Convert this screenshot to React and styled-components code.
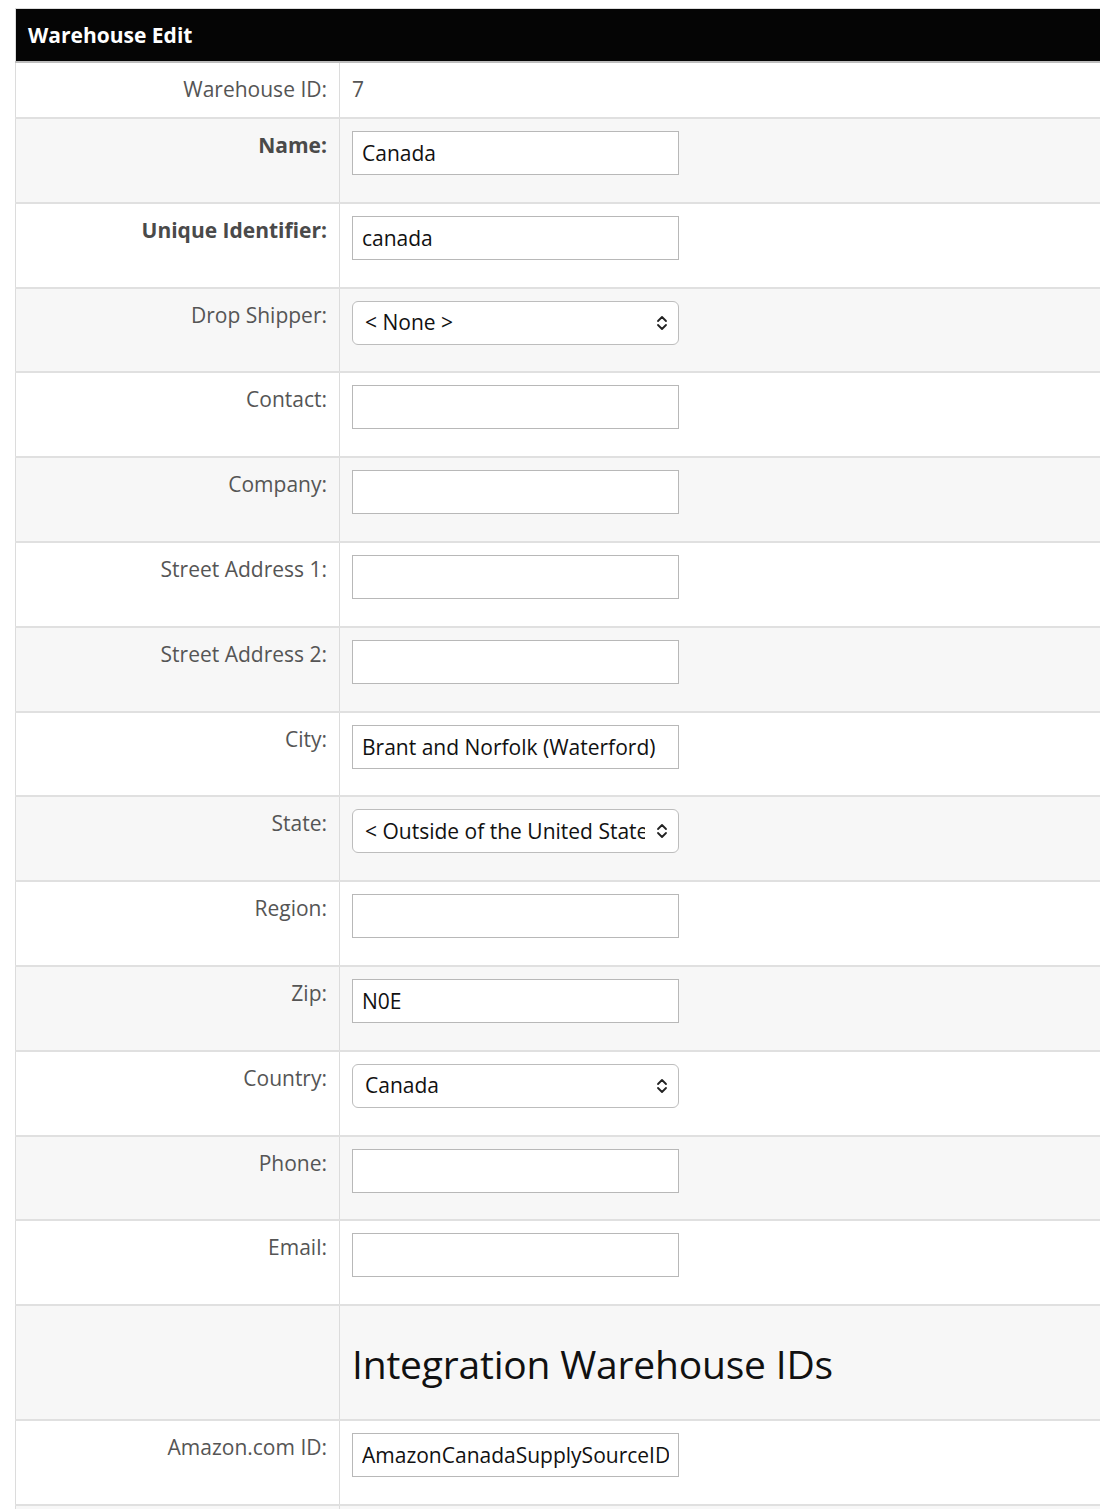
import React from "react";
import styled, { createGlobalStyle } from "styled-components";

const Global = createGlobalStyle`
  html, body { margin: 0; padding: 0; background: #fff; overflow-x: hidden; }
  body { font-family: "Open Sans", "Noto Sans", Arial, sans-serif; }
`;

const Page = styled.div`
  padding: 8px 0 0 15px;
  width: 1200px;
`;

const Table = styled.table`
  width: 1200px;
  border-collapse: collapse;
  border-left: 1px solid #dcdcdc;
  border-top: 1px solid #dcdcdc;
`;

const HeadCell = styled.th`
  background: #050505;
  color: #fff;
  text-align: left;
  font-weight: 700;
  font-size: 21px;
  height: 52px;
  padding: 0 12px;
  border-bottom: 2px solid #bdbdbd;
  line-height: 1;
`;

const Row = styled.tr`
  background: ${(p) => (p.$alt ? "#f7f7f7" : "#fff")};
  border-bottom: 2px solid #e0e0e0;
  height: ${(p) => p.$h || 84.8}px;
`;

const Label = styled.td`
  width: 311px;
  padding: ${(p) => (p.$compact ? "14px" : "14px")} 12px 0 0;
  vertical-align: top;
  text-align: right;
  color: ${(p) => (p.$strong ? "#4a4a4a" : "#555")};
  font-weight: ${(p) => (p.$strong ? 700 : 400)};
  font-size: 21px;
  line-height: 24px;
  border-right: 1px solid #dcdcdc;
  box-sizing: content-box;
`;

const Value = styled.td`
  padding: ${(p) => (p.$compact ? "14px" : "12px")} 12px 0 12px;
  vertical-align: ${(p) => (p.$middle ? "middle" : "top")};
  color: #555;
  font-size: 21px;
  line-height: 24px;
`;

const Input = styled.input`
  box-sizing: border-box;
  width: 327px;
  height: 44px;
  border: 1px solid #b8b8b8;
  border-radius: 0;
  padding: 0 9px;
  font-family: "Open Sans", "Noto Sans", Arial, sans-serif;
  font-size: 21px;
  color: #111;
  background: #fff;
  outline: none;
  display: block;
`;

const SelectBox = styled.div`
  box-sizing: border-box;
  width: 327px;
  height: 44px;
  border: 1px solid #bdbdbd;
  border-radius: 6px;
  padding: 0 10px 0 12px;
  font-size: 21px;
  line-height: 1.4;
  color: #111;
  background: #fff;
  display: flex;
  align-items: center;
  gap: 11px;
`;

const SelectText = styled.span`
  flex: 1;
  white-space: nowrap;
  overflow: hidden;
`;

const Heading = styled.h2`
  margin: 0 0 9px;
  font-weight: 400;
  font-size: 39px;
  color: #111;
  line-height: 1.2;
  letter-spacing: -0.2px;
`;

const Chevrons = () => (
  <svg width="12" height="16" viewBox="0 0 12 16" fill="none" stroke="#222" strokeWidth="1.8" strokeLinecap="round" strokeLinejoin="round">
    <path d="M2 6 L6 2 L10 6" />
    <path d="M2 10 L6 14 L10 10" />
  </svg>
);

const Select = ({ value }) => (
  <SelectBox>
    <SelectText>{value}</SelectText>
    <Chevrons />
  </SelectBox>
);

const fields = [
  { label: "Name:", strong: true, input: "Canada" },
  { label: "Unique Identifier:", strong: true, input: "canada" },
  { label: "Drop Shipper:", select: "< None >" },
  { label: "Contact:", input: "" },
  { label: "Company:", input: "" },
  { label: "Street Address 1:", input: "" },
  { label: "Street Address 2:", input: "" },
  { label: "City:", input: "Brant and Norfolk (Waterford)" },
  { label: "State:", select: "< Outside of the United States >" },
  { label: "Region:", input: "" },
  { label: "Zip:", input: "N0E" },
  { label: "Country:", select: "Canada" },
  { label: "Phone:", input: "" },
  { label: "Email:", input: "" },
];

export default function App() {
  return (
    <>
      <Global />
      <Page>
        <Table>
          <thead>
            <tr>
              <HeadCell colSpan={2}>Warehouse Edit</HeadCell>
            </tr>
          </thead>
          <tbody>
            <Row $h={56}>
              <Label $compact>Warehouse ID:</Label>
              <Value $compact>7</Value>
            </Row>
            {fields.map((f, i) => (
              <Row key={f.label} $alt={i % 2 === 0}>
                <Label $strong={f.strong}>{f.label}</Label>
                <Value>
                  {f.select !== undefined ? (
                    <Select value={f.select} />
                  ) : (
                    <Input defaultValue={f.input} />
                  )}
                </Value>
              </Row>
            ))}
            <Row $alt $h={115}>
              <Label />
              <Value $middle>
                <Heading>Integration Warehouse IDs</Heading>
              </Value>
            </Row>
            <Row>
              <Label>Amazon.com ID:</Label>
              <Value>
                <Input defaultValue="AmazonCanadaSupplySourceID" />
              </Value>
            </Row>
            <Row $alt>
              <Label />
              <Value />
            </Row>
          </tbody>
        </Table>
      </Page>
    </>
  );
}
